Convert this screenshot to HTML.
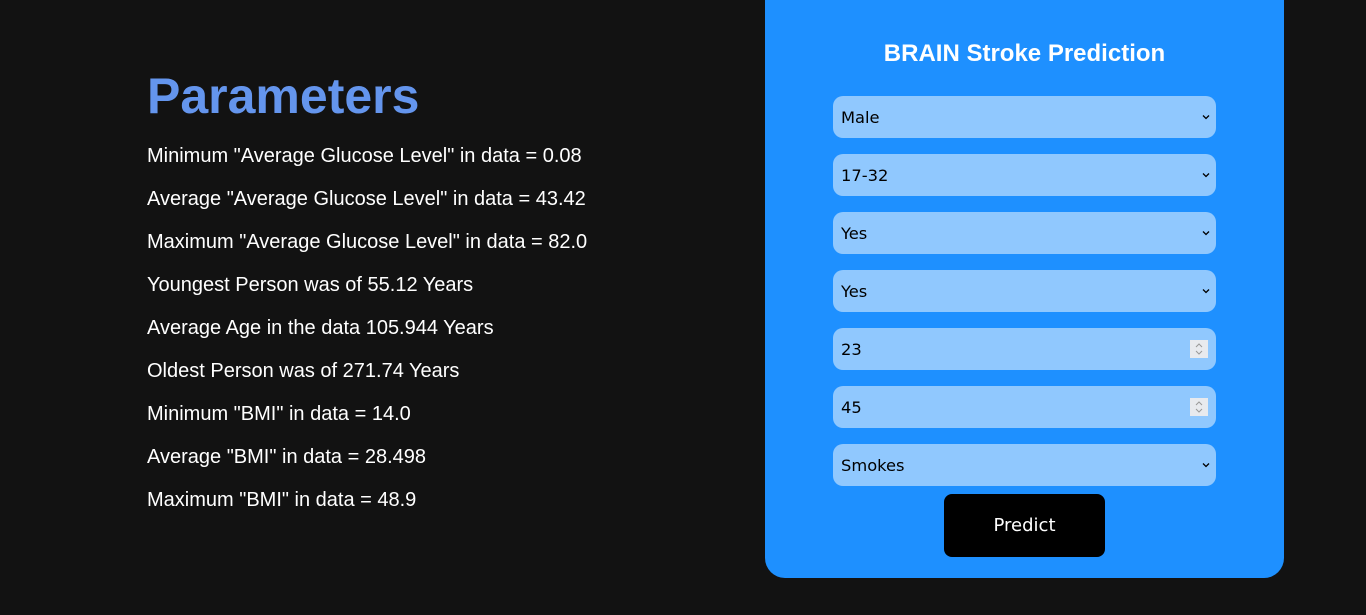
<!DOCTYPE html>
<html><head><style>
body{margin:0;background:#121212;width:1366px;height:615px;overflow:hidden;font-family:"Liberation Sans",Arial,sans-serif;position:relative}
h1{position:absolute;left:147px;top:66px;margin:0;font-size:50px;font-weight:bold;color:#6495ed;line-height:60px}
.p{position:absolute;left:147px;color:#fff;font-size:20px;line-height:24px}
.card{position:absolute;left:765px;top:-20px;width:519px;height:598px;background:#1e90ff;border-radius:20px}
.t{position:absolute;left:765px;width:519px;top:40px;text-align:center;color:#fff;font-weight:bold;font-size:24px}
.f{position:absolute;left:833px;width:383px;height:42px;background:#90c8fe;border-radius:10px;font-family:"DejaVu Sans",sans-serif;font-size:16.3px;color:#000;line-height:44px;box-sizing:border-box;padding-left:8px}
.f svg.c{position:absolute;right:6px;top:18px}
.f .s{position:absolute;right:8px;top:12px;width:18px;height:18px;background:#e8eaee}
.b{position:absolute;left:944px;top:494px;width:161px;height:63px;background:#000;border-radius:8px;color:#fff;text-align:center;line-height:64px;font-family:"DejaVu Sans",sans-serif;font-size:18px}
</style></head><body>
<h1>Parameters</h1>
<div class="p" style="top:144px">Minimum "Average Glucose Level" in data = 0.08</div>
<div class="p" style="top:187px">Average "Average Glucose Level" in data = 43.42</div>
<div class="p" style="top:230px">Maximum "Average Glucose Level" in data = 82.0</div>
<div class="p" style="top:273px">Youngest Person was of 55.12 Years</div>
<div class="p" style="top:316px">Average Age in the data 105.944 Years</div>
<div class="p" style="top:359px">Oldest Person was of 271.74 Years</div>
<div class="p" style="top:402px">Minimum "BMI" in data = 14.0</div>
<div class="p" style="top:445px">Average "BMI" in data = 28.498</div>
<div class="p" style="top:488px">Maximum "BMI" in data = 48.9</div>
<div class="card"></div>
<div class="t">BRAIN Stroke Prediction</div>
<div class="f" style="top:96px">Male<svg class="c" width="8" height="6"><path d="M1 1.5L4 4.5L7 1.5" stroke="#000" stroke-width="1.3" fill="none"/></svg></div>
<div class="f" style="top:154px">17-32<svg class="c" width="8" height="6"><path d="M1 1.5L4 4.5L7 1.5" stroke="#000" stroke-width="1.3" fill="none"/></svg></div>
<div class="f" style="top:212px">Yes<svg class="c" width="8" height="6"><path d="M1 1.5L4 4.5L7 1.5" stroke="#000" stroke-width="1.3" fill="none"/></svg></div>
<div class="f" style="top:270px">Yes<svg class="c" width="8" height="6"><path d="M1 1.5L4 4.5L7 1.5" stroke="#000" stroke-width="1.3" fill="none"/></svg></div>
<div class="f" style="top:328px">23<svg class="s" width="18" height="18"><path d="M6 7L9 4L12 7M6 11L9 14L12 11" stroke="#999" stroke-width="1" fill="none"/></svg></div>
<div class="f" style="top:386px">45<svg class="s" width="18" height="18"><path d="M6 7L9 4L12 7M6 11L9 14L12 11" stroke="#999" stroke-width="1" fill="none"/></svg></div>
<div class="f" style="top:444px">Smokes<svg class="c" width="8" height="6"><path d="M1 1.5L4 4.5L7 1.5" stroke="#000" stroke-width="1.3" fill="none"/></svg></div>
<div class="b">Predict</div>
</body></html>
